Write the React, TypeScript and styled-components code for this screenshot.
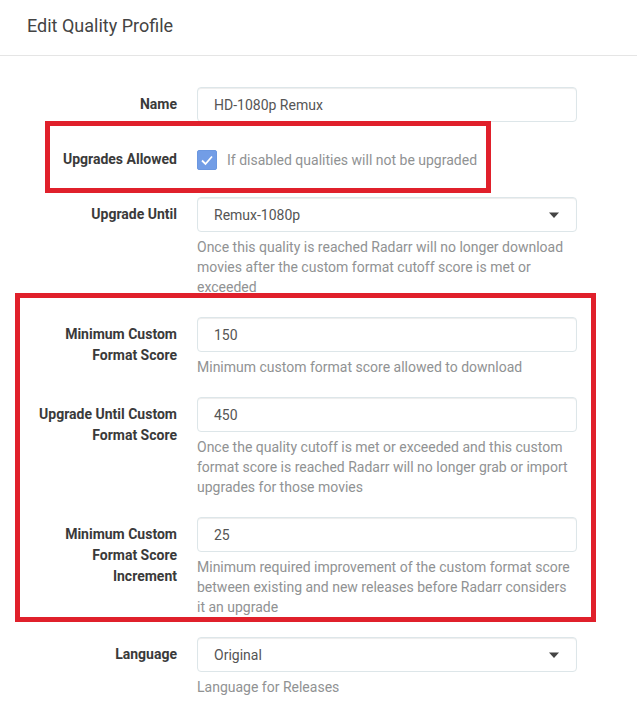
import React from "react";
import styled, { createGlobalStyle } from "styled-components";

const GlobalStyle = createGlobalStyle`
  html, body {
    margin: 0;
    padding: 0;
    background: #ffffff;
  }
  body {
    font-family: Roboto, "Open Sans", "Liberation Sans", sans-serif;
    font-size: 14px;
    color: #515253;
  }
`;

const Modal = styled.div`
  width: 637px;
  background: #fff;
`;

const Header = styled.div`
  padding: 13px 30px 17px 27px;
  border-bottom: 1px solid #e5e5e5;
  font-size: 18px;
  line-height: 25px;
  color: #444;
  font-weight: 400;
`;

const Body = styled.div`
  padding: 31px 0 20px 27px;
`;

const Form = styled.div`
  display: flex;
  flex-direction: column;
  gap: 20px;
`;

const Group = styled.div`
  display: flex;
  align-items: flex-start;
`;

const Label = styled.div`
  flex: 0 0 150px;
  margin-right: 20px;
  padding-top: 7px;
  text-align: right;
  font-weight: 700;
  font-size: 14px;
  line-height: 21px;
  color: #3a3a3a;
`;

const Field = styled.div`
  width: 380px;
  display: flex;
  flex-direction: column;
`;

const TextBox = styled.div`
  box-sizing: border-box;
  height: 35px;
  padding: 0 16px;
  border: 1px solid #dde6e9;
  border-radius: 4px;
  box-shadow: inset 0 1px 1px rgba(0, 0, 0, 0.075);
  display: flex;
  align-items: center;
  justify-content: space-between;
  font-size: 14px;
  color: #555;
  background: #fff;
`;

const Help = styled.div`
  margin-top: 5px;
  font-size: 14px;
  line-height: 20px;
  color: #909293;
`;

const CheckRow = styled.div`
  height: 35px;
  display: flex;
  align-items: center;
`;

const CheckBox = styled.span`
  box-sizing: border-box;
  width: 20px;
  height: 20px;
  border-radius: 2px;
  background: #729de6;
  border: 1px solid #6b97e0;
  display: inline-flex;
  align-items: center;
  justify-content: center;
  margin-right: 10px;
`;

const CheckText = styled.span`
  color: #909293;
  font-size: 14px;
`;

const Highlight = styled.div<{ $t: number; $r: number; $b: number; $l: number }>`
  position: relative;
  align-self: flex-start;
  display: flex;
  flex-direction: column;
  gap: 20px;
  &::after {
    content: "";
    position: absolute;
    top: ${(p) => p.$t}px;
    right: ${(p) => p.$r}px;
    bottom: ${(p) => p.$b}px;
    left: ${(p) => p.$l}px;
    border: 5px solid #e0202b;
    pointer-events: none;
  }
`;

const Caret = () => (
  <svg width="12" height="8" viewBox="0 0 12 8">
    <path d="M1 1.5 L11 1.5 L6 7 Z" fill="#444" />
  </svg>
);

const Check = () => (
  <svg width="14" height="12" viewBox="0 0 14 12">
    <path d="M2 6.5 L5.5 10 L12 2.5" fill="none" stroke="#fff" strokeWidth="1.8" />
  </svg>
);

type Row = { label: string; value: string; help?: string; select?: boolean };

const TextRow = ({ label, value, help, select }: Row) => (
  <Group>
    <Label>{label}</Label>
    <Field>
      <TextBox>
        <span>{value}</span>
        {select && <Caret />}
      </TextBox>
      {help && <Help>{help}</Help>}
    </Field>
  </Group>
);

export default function App() {
  return (
    <>
      <GlobalStyle />
      <Modal>
        <Header>Edit Quality Profile</Header>
        <Body>
          <Form>
            <TextRow label="Name" value="HD-1080p Remux" />
            <Highlight $t={-21} $r={86} $b={-16} $l={18}>
              <Group>
                <Label>Upgrades Allowed</Label>
                <Field>
                  <CheckRow>
                    <CheckBox>
                      <Check />
                    </CheckBox>
                    <CheckText>If disabled qualities will not be upgraded</CheckText>
                  </CheckRow>
                </Field>
              </Group>
            </Highlight>
            <TextRow
              label="Upgrade Until"
              value="Remux-1080p"
              select
              help="Once this quality is reached Radarr will no longer download movies after the custom format cutoff score is met or exceeded"
            />
            <Highlight $t={-24} $r={-19} $b={-5} $l={-12}>
              <TextRow
                label="Minimum Custom Format Score"
                value="150"
                help="Minimum custom format score allowed to download"
              />
              <TextRow
                label="Upgrade Until Custom Format Score"
                value="450"
                help="Once the quality cutoff is met or exceeded and this custom format score is reached Radarr will no longer grab or import upgrades for those movies"
              />
              <TextRow
                label="Minimum Custom Format Score Increment"
                value="25"
                help="Minimum required improvement of the custom format score between existing and new releases before Radarr considers it an upgrade"
              />
            </Highlight>
            <TextRow label="Language" value="Original" select help="Language for Releases" />
          </Form>
        </Body>
      </Modal>
    </>
  );
}
